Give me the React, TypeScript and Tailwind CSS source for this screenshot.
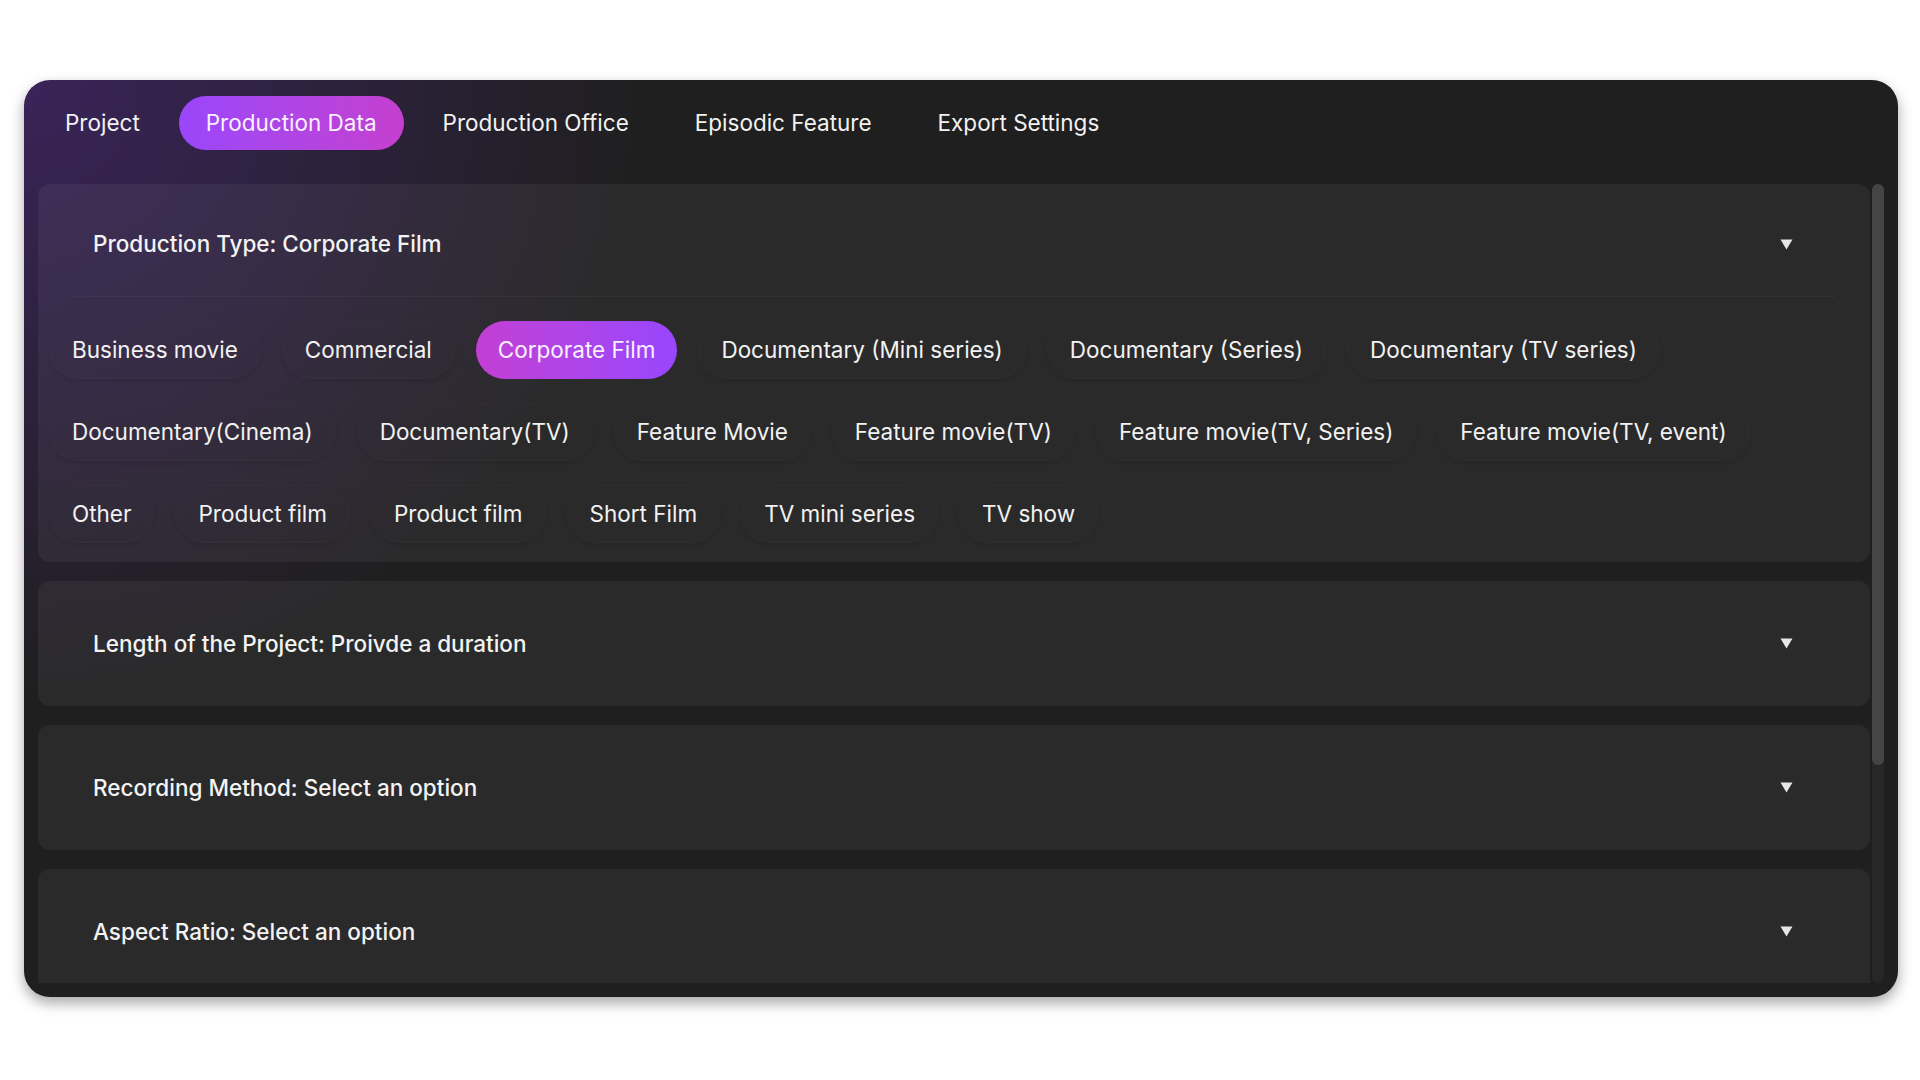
import React from "react";

const tabs = ["Project", "Production Data", "Production Office", "Episodic Feature", "Export Settings"];

const types = [
    ["Business movie", "Commercial", "Corporate Film", "Documentary (Mini series)", "Documentary (Series)", "Documentary (TV series)"],
    ["Documentary(Cinema)", "Documentary(TV)", "Feature Movie", "Feature movie(TV)", "Feature movie(TV, Series)", "Feature movie(TV, event)"],
    ["Other", "Product film", "Product film", "Short Film", "TV mini series", "TV show"],
];

const sections = [
    "Length of the Project: Proivde a duration",
    "Recording Method: Select an option",
    "Aspect Ratio: Select an option",
];

function Caret() {
    return (
        <svg width="13" height="11" viewBox="0 0 13 11" className="shrink-0">
            <polygon points="0.5,0.5 12.5,0.5 6.5,10.5" fill="#e6e6e6" />
        </svg>
    );
}

function SectionHeader({ title }: { title: string }) {
    return (
        <div className="flex items-center justify-between pl-[55px] pr-[77px]">
            <span className="text-[22.5px] font-medium text-[#f3f3f3]">{title}</span>
            <Caret />
        </div>
    );
}

export default function App() {
    const selectedTab = "Production Data";
    const selectedType = "Corporate Film";

    return (
        <div className="min-h-screen bg-white pt-[80px] pl-[24px]" style={{ fontFamily: "Inter, 'Noto Sans', sans-serif" }}>
            <div className="w-[1874px] h-[917px] rounded-[26px] bg-[#1f1f1f] bg-[radial-gradient(ellipse_620px_620px_at_0%_0%,rgba(84,40,146,0.5),rgba(31,31,31,0))] shadow-[0_6px_14px_rgba(0,0,0,0.35)] flex flex-col overflow-hidden">
                {/* tabs */}
                <div className="flex items-center gap-[12px] pl-[14px] pt-[16px]">
                    {tabs.map((tab) => (
                        <div
                            key={tab}
                            className={
                                tab === selectedTab
                                    ? "h-[54px] px-[27px] flex items-center rounded-full bg-gradient-to-r from-[#9a46fb] to-[#c53fcf] text-[22.5px] text-[#f6f0ff]"
                                    : "h-[54px] px-[27px] flex items-center rounded-full text-[22.5px] text-[#f2f2f2]"
                            }
                        >
                            {tab}
                        </div>
                    ))}
                </div>

                {/* body + scrollbar */}
                <div className="flex flex-1 min-h-0 mt-[34px] pl-[14px] pr-[14px] pb-[14px]">
                    <div className="flex-1 overflow-hidden flex flex-col gap-[19px]">
                        <div className="rounded-[12px] bg-white/[0.05] shrink-0">
                            <div className="h-[112px] flex flex-col justify-center pt-[8px]">
                                <SectionHeader title={`Production Type: ${selectedType}`} />
                            </div>
                            <div className="h-px mx-[35px] bg-white/[0.04]" />
                            <div className="flex flex-col gap-[24px] px-[11px] pt-[24px] pb-[19px]">
                                {types.map((row, i) => (
                                    <div key={i} className="flex gap-[21px]">
                                        {row.map((t, j) => (
                                            <div
                                                key={j}
                                                className={
                                                    t === selectedType
                                                        ? "h-[58px] px-[22px] flex items-center rounded-full bg-gradient-to-r from-[#c33fd4] to-[#9846fd] text-[22.5px] text-[#f8f0ff]"
                                                        : "h-[58px] px-[22px] flex items-center rounded-full border border-white/[0.02] shadow-[0_2px_4px_rgba(0,0,0,0.1)] text-[22.5px] text-[#f2f2f2]"
                                                }
                                            >
                                                {t}
                                            </div>
                                        ))}
                                    </div>
                                ))}
                            </div>
                        </div>

                        {sections.map((s) => (
                            <div key={s} className="h-[125px] shrink-0 rounded-[12px] bg-white/[0.05] flex flex-col justify-center">
                                <SectionHeader title={s} />
                            </div>
                        ))}
                    </div>

                    <div className="w-[12px] ml-[2px] rounded-full bg-[#272727] flex flex-col">
                        <div className="h-[581px] rounded-full bg-[#454545]" />
                    </div>
                </div>
            </div>
        </div>
    );
}
